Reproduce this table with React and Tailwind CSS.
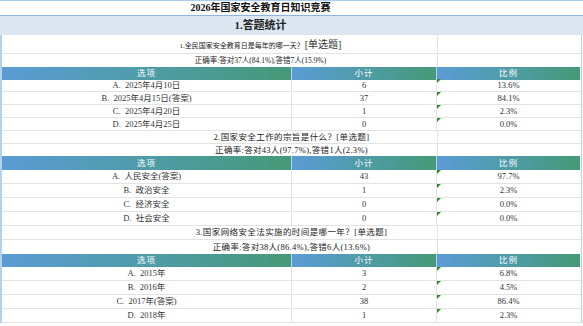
import React from "react";

const blocks = [
  {
    question: "1.全民国家安全教育日是每年的哪一天？",
    tag: "[单选题]",
    small: true,
    rate: "正确率:答对37人(84.1%),答错7人(15.9%)",
    h: { q: "h-[19px]", rate: "h-[13px]", head: "h-[12px]", row: "h-[13px]" },
    rows: [
      ["A.  2025年4月10日", "6", "13.6%"],
      ["B.  2025年4月15日(答案)", "37", "84.1%"],
      ["C.  2025年4月20日", "1", "2.3%"],
      ["D.  2025年4月25日", "0", "0.0%"],
    ],
  },
  {
    question: "2.国家安全工作的宗旨是什么？",
    tag: "[单选题]",
    rate: "正确率:答对43人(97.7%),答错1人(2.3%)",
    h: { q: "h-[13px]", rate: "h-[12px]", head: "h-[14px]", row: "h-[14px]" },
    rows: [
      ["A.  人民安全(答案)", "43", "97.7%"],
      ["B.  政治安全", "1", "2.3%"],
      ["C.  经济安全", "0", "0.0%"],
      ["D.  社会安全", "0", "0.0%"],
    ],
  },
  {
    question: "3.国家网络安全法实施的时间是哪一年？",
    tag: "[单选题]",
    rate: "正确率:答对38人(86.4%),答错6人(13.6%)",
    h: { q: "h-[14px]", rate: "h-[14px]", head: "h-[13px]", row: "h-[14px]" },
    rows: [
      ["A.  2015年", "3", "6.8%"],
      ["B.  2016年", "2", "4.5%"],
      ["C.  2017年(答案)", "38", "86.4%"],
      ["D.  2018年", "1", "2.3%"],
    ],
  },
];

// faint gridline at the column 3 boundary, shown where text does not overflow
const gridLine =
  "bg-[linear-gradient(to_right,transparent_435px,#e3e3e3_435px,#e3e3e3_436px,transparent_436px)]";

function Block({ b }) {
  return (
    <div>
      {/* question */}
      <div
        className={`${b.h.q} flex items-center justify-center border-b border-[#e3e3e3] ${gridLine} ${
          b.small ? "pr-[62px]" : ""
        }`}
      >
        {b.small ? (
          <span className="text-[7px] text-[#222] whitespace-nowrap">
            {b.question}
            <span className="text-[10px] text-[#333] ml-[1px]">{b.tag}</span>
          </span>
        ) : (
          <span className="text-[8.5px] text-[#222] whitespace-nowrap tracking-[0.4px]">
            {b.question}
            {b.tag}
          </span>
        )}
      </div>
      {/* correct rate */}
      <div
        className={`${b.h.rate} flex items-center justify-center ${gridLine} ${
          b.small ? "pr-[62px]" : ""
        }`}
      >
        <span
          className={`${
            b.small ? "text-[7.5px]" : "text-[8.5px] tracking-[0.3px]"
          } text-[#222] whitespace-nowrap`}
        >
          {b.rate}
        </span>
      </div>
      {/* header */}
      <div className={`${b.h.head} grid grid-cols-[290px_145px_143px] text-white text-[8.5px] tracking-[1px]`}>
        <div className="flex items-center justify-center bg-gradient-to-r from-[#5b9bd5] to-[#449a77] border-r border-[#b9d4ea]">
          选项
        </div>
        <div className="flex items-center justify-center bg-gradient-to-r from-[#5b9bd5] to-[#449a77] border-r border-[#b9d4ea]">
          小计
        </div>
        <div className="flex items-center justify-center bg-gradient-to-r from-[#5b9bd5] to-[#449a77]">
          比例
        </div>
      </div>
      {/* rows */}
      {b.rows.map((r, i) => (
        <div
          key={i}
          className={`${b.h.row} grid grid-cols-[290px_145px_143px] border-b border-[#e3e3e3] text-[8.5px] text-[#333]`}
        >
          <div className="flex items-center justify-center border-r border-[#e3e3e3] whitespace-pre">
            {r[0]}
          </div>
          <div className="flex items-center justify-center border-r border-[#e3e3e3]">{r[1]}</div>
          <div className="relative flex items-center justify-center">
            <span className="absolute left-0 top-0 w-0 h-0 border-t-[4px] border-r-[4px] border-t-[#2d8a2d] border-r-transparent" />
            {r[2]}
          </div>
        </div>
      ))}
    </div>
  );
}

export default function App() {
  return (
    <div
      className="w-[583px] h-[326px] bg-white overflow-hidden"
      style={{ fontFamily: '"Liberation Serif", "Noto Sans CJK SC", serif' }}
    >
      {/* title */}
      <div className="h-[16px] border-t border-b border-t-[#a9cbe9] border-b-[#8db4e2] flex items-center justify-center pr-[62px]">
        <span className="text-[10px] font-bold text-[#111] leading-none">2026年国家安全教育日知识竞赛</span>
      </div>
      {/* section */}
      <div className="h-[19px] bg-[#dce6f1] flex items-center justify-center pr-[62px]">
        <span className="text-[11px] font-bold text-[#222] leading-none">1.答题统计</span>
      </div>
      {/* body */}
      <div className="w-[582px] border-l-2 border-r border-[#b4d1ec]">
        {blocks.map((b, i) => (
          <Block key={i} b={b} />
        ))}
      </div>
    </div>
  );
}
